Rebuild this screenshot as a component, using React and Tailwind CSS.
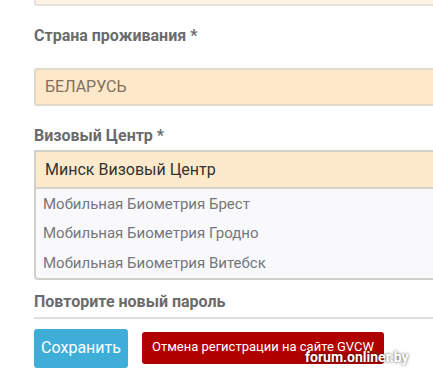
import React from "react";

const centers = [
  "Мобильная Биометрия Брест",
  "Мобильная Биометрия Гродно",
  "Мобильная Биометрия Витебск",
];

export default function App() {
  return (
    <div className="relative h-[378px] w-[433px] overflow-hidden bg-white font-['Roboto','Liberation_Sans',sans-serif]">
      <div className="pl-[34px]">
        {/* previous field, cut off at the top */}
        <div className="-mt-[30px] h-[36px] w-[420px] rounded-[3px] border-2 border-[#e6e1da] bg-[#fdf4e6]" />

        <div className="mt-[20px] text-[16px] font-bold leading-[20px] text-[#6b6b6b]">
          Страна проживания *
        </div>
        <div className="mt-[22px] flex h-[38px] w-[420px] items-center rounded-[3px] border-2 border-[#e2d9cc] bg-[#fde8c9] pl-[9px] text-[16px] text-[#807060]">
          БЕЛАРУСЬ
        </div>

        <div className="mt-[20px] text-[16px] font-bold leading-[20px] text-[#6b6b6b]">
          Визовый Центр *
        </div>
        <div className="mt-[4px] w-[420px] overflow-hidden rounded-b-[4px] border-2 border-[#d3d0cc] bg-[#f9f9fb]">
          <div className="flex h-[37px] items-center border-b-2 border-[#d6d2cc] bg-[#fde9cc] pl-[9px] text-[16px] text-[#333]">
            Минск Визовый Центр
          </div>
          <ul>
            {centers.map((c) => (
              <li
                key={c}
                className="flex h-[29.5px] items-center pl-[7px] text-[15px] text-[#74777b]"
              >
                {c}
              </li>
            ))}
          </ul>
        </div>

        <div className="mt-[12px] w-[420px] border-b-2 border-[#dedede] pb-[5px] text-[16px] font-bold leading-[20px] text-[#6b6b6b]">
          Повторите новый пароль
        </div>

        <div className="mt-[10px] flex items-center gap-[14px]">
          <button className="h-[39px] w-[94px] rounded-[3px] bg-[#3eaed8] text-[16px] text-white">
            Сохранить
          </button>
          <button className="h-[32px] w-[242px] rounded-[3px] bg-[#b00000] pb-[2px] text-[13px] text-white">
            Отмена регистрации на сайте GVCW
          </button>
        </div>
      </div>

      <div className="absolute left-[305px] top-[349px] text-[14px] font-bold leading-[16px] text-white [text-shadow:0_0_3px_rgba(0,0,0,0.75)]">
        forum.onliner.by
      </div>
    </div>
  );
}
